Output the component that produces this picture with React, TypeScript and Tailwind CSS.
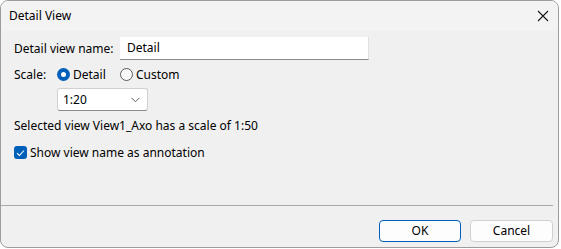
import React from "react";

export default function App() {
  return (
    <div className="w-[561px] h-[249px] bg-white" style={{ fontFamily: '"Noto Sans", "Liberation Sans", sans-serif' }}>
      <div className="w-[559px] h-[248px] border border-[#9c9c9c] rounded-[8px] overflow-hidden flex flex-col bg-[#f0f0f0] text-[12px] text-[#000]">
        <div className="h-[30px] bg-[#f3f3f3] flex items-center justify-between pl-[8px] pr-[9px] shrink-0">
          <span className="leading-none">Detail View</span>
          <svg width="12" height="12" viewBox="0 0 12 12" className="mr-[0px]">
            <path d="M1 1 L11 11 M11 1 L1 11" stroke="#1a1a1a" strokeWidth="1.1" />
          </svg>
        </div>
        <div className="flex-1 flex flex-col">
          <div className="pl-[13px] pt-[6px] flex flex-col">
            <div className="flex items-center h-[23px]">
              <span className="w-[106px]">Detail view name:</span>
              <div className="w-[249px] h-[23px] bg-white border-b border-b-[#8a8a8a] border-r border-r-[#e0e0e0] flex items-center pl-[7px]">
                Detail
              </div>
            </div>
            <div className="flex items-center h-[19px] mt-[5px]">
              <span className="w-[43px]">Scale:</span>
              <div className="w-[13px] h-[13px] rounded-full bg-[#005fb8] flex items-center justify-center">
                <div className="w-[5px] h-[5px] rounded-full bg-white" />
              </div>
              <span className="ml-[3px] w-[47px]">Detail</span>
              <div className="w-[13px] h-[13px] rounded-full border border-[#5c5c5c] bg-[#f7f7f7]" />
              <span className="ml-[3px]">Custom</span>
            </div>
            <div className="mt-[4px] ml-[43px] w-[91px] h-[23px] bg-white border border-[#d1d1d1] border-b-[#8a8a8a] rounded-[3px] flex items-center justify-between pl-[5px] pr-[7px]">
              <span>1:20</span>
              <svg width="9" height="6" viewBox="0 0 9 6">
                <path d="M0.5 0.8 L4.5 4.8 L8.5 0.8" fill="none" stroke="#5f5f5f" strokeWidth="1" />
              </svg>
            </div>
            <div className="h-[18px] mt-[6px] flex items-center">
              Selected view View1_Axo has a scale of 1:50
            </div>
            <div className="h-[19px] mt-[8px] flex items-center">
              <div className="w-[13px] h-[13px] rounded-[3px] bg-[#005fb8] flex items-center justify-center">
                <svg width="9" height="8" viewBox="0 0 9 8">
                  <path d="M1 4.2 L3.4 6.5 L8 1.5" fill="none" stroke="white" strokeWidth="1.1" />
                </svg>
              </div>
              <span className="ml-[3px]">Show view name as annotation</span>
            </div>
          </div>
          <div className="flex-1" />
          <div className="h-px bg-[#a8a8a8] mr-[5px]" />
          <div className="flex justify-end gap-[9px] pr-[5px] pt-[14px] pb-[5px]">
            <div className="w-[82px] h-[22px] rounded-[4px] bg-[#fdfdfd] border border-[#005fb8] flex items-center justify-center">OK</div>
            <div className="w-[83px] h-[22px] rounded-[4px] bg-[#fdfdfd] border border-[#d0d0d0] flex items-center justify-center">Cancel</div>
          </div>
        </div>
      </div>
    </div>
  );
}
